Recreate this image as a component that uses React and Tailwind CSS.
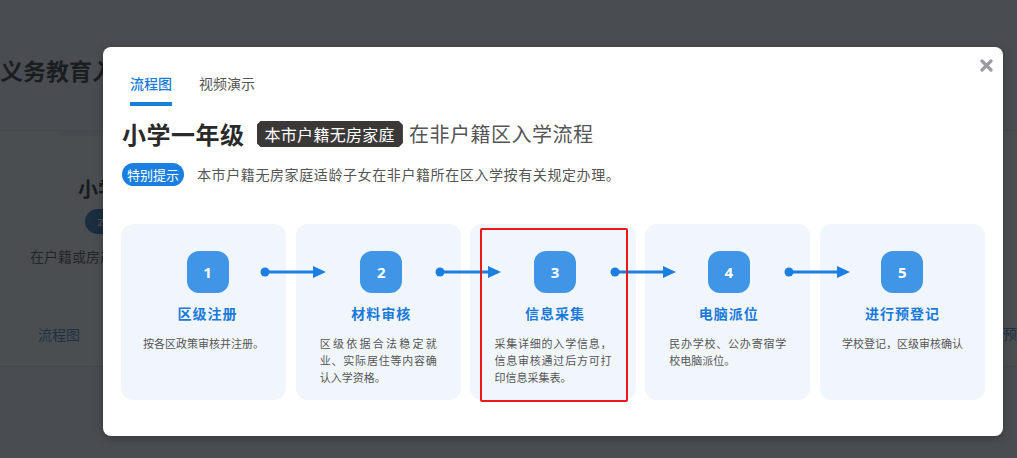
import React from 'react';

const steps = [
  { no: 1, title: '区级注册', desc: '按各区政策审核并注册。', nowrap: true, shift: 'translate-x-[4px]' },
  { no: 2, title: '材料审核', desc: '区级依据合法稳定就业、实际居住等内容确认入学资格。', shift: 'translate-x-[3px]' },
  { no: 3, title: '信息采集', desc: '采集详细的入学信息，信息审核通过后方可打印信息采集表。', shift: 'translate-x-[2px]' },
  { no: 4, title: '电脑派位', desc: '民办学校、公办寄宿学校电脑派位。', shift: 'translate-x-[1px]' },
  { no: 5, title: '进行预登记', desc: '学校登记，区级审核确认', nowrap: true, shift: 'translate-x-0' },
];

const Arrow = () => (
  <svg
    className="absolute top-[41px] left-[calc(100%-26px)] z-10"
    width="66"
    height="14"
    viewBox="0 0 66 14"
  >
    <circle cx="5" cy="7" r="4.5" fill="#1a7fe0" />
    <line x1="5" y1="7" x2="56" y2="7" stroke="#1a7fe0" strokeWidth="3" />
    <polygon points="53,1 66,7 53,13" fill="#1a7fe0" />
  </svg>
);

const StepCard = ({ step, last, highlighted }) => (
  <div className="relative min-w-0 h-[176px] rounded-[12px] bg-[#f1f6fc] flex flex-col items-center pt-[27px]">
    <div className={`${step.shift} w-[42px] h-[42px] rounded-[12px] bg-[#4096e6] flex items-center justify-center text-white text-[15px] font-bold font-[family-name:'Noto_Sans',sans-serif]`}>
      {step.no}
    </div>
    <div className={`${step.shift} mt-[10px] h-[20px] leading-[20px] text-[14px] font-bold text-[#1a7ad9] tracking-[1px]`}>
      {step.title}
    </div>
    <div className="mt-[12px] px-[24px] w-full flex justify-center">
      <p
        className={`inline-block text-[11px] leading-[17px] text-[#555] text-justify ${
          step.nowrap ? 'whitespace-nowrap' : 'max-w-[117px]'
        }`}
      >
        {step.desc}
      </p>
    </div>
    {!last && <Arrow />}
    {highlighted && (
      <div className="absolute left-[10px] top-[4px] w-[148px] h-[174px] border-2 border-[#f0161a] rounded-[2px] z-20" />
    )}
  </div>
);

export default function App() {
  return (
    <div className="relative w-[1017px] h-[458px] overflow-hidden bg-[#f4f6f8] font-[family-name:'Noto_Sans_CJK_SC','Liberation_Sans',sans-serif]">
      {/* page behind the dialog */}
      <div className="h-[130px] pt-[54px]">
        <h1 className="text-[23px] leading-[32px] font-bold text-[#111] whitespace-nowrap">
          义务教育入学流程指引
        </h1>
      </div>
      <div className="relative h-[237px] bg-white border-y border-[#d9e2ea]">
        <div className="absolute top-0 left-[60px] w-[140px] h-[5px] bg-[#e9eef3]" />
        <div className="flex flex-col items-start pt-[44px] whitespace-nowrap">
          <div className="ml-[78px] text-[20px] leading-[28px] font-bold text-black">小学一年级</div>
          <div className="mt-[6px] ml-[85px] h-[25px] px-[12px] rounded-full bg-[#0e5fa3] text-white text-[13px] leading-[25px]">
            本市户籍
          </div>
          <div className="mt-[12px] ml-[30px] text-[14px] leading-[20px] text-[#333]">在户籍或房产所在区入学</div>
          <div className="mt-[58px] ml-[38px] text-[14px] leading-[20px] text-[#1e6fb8]">流程图</div>
        </div>
        <span className="absolute left-[975px] top-[192px] text-[14px] leading-[20px] text-[#1e6fb8] whitespace-nowrap">
          视频预演
        </span>
      </div>

      {/* overlay */}
      <div className="absolute inset-0 bg-[rgba(30,34,37,0.8)]" />

      {/* dialog */}
      <div className="absolute left-[103px] top-[47px] w-[900px] h-[389px] bg-white rounded-[8px] shadow-[0_2px_8px_rgba(0,0,0,0.25)] px-[18px] pt-[26px]">
        <button className="absolute right-[10px] top-[12px] w-[13px] h-[13px]">
          <svg width="13" height="13" viewBox="0 0 13 13">
            <path d="M2 2 L11 11 M11 2 L2 11" stroke="#9a9ca0" strokeWidth="3.2" strokeLinecap="round" />
          </svg>
        </button>

        <div className="ml-[9px] flex gap-[27px] text-[14px] leading-[20px]">
          <div className="flex flex-col">
            <span className="text-[#1a7ad9] font-medium">流程图</span>
            <span className="mt-[9px] h-[4px] bg-[#1a7fd6]" />
          </div>
          <span className="text-[#555]">视频演示</span>
        </div>

        <div className="mt-[12px] pl-px h-[32px] flex items-center whitespace-nowrap">
          <span className="text-[24px] font-bold text-[#2a2a2a] tracking-[0.5px]">小学一年级</span>
          <span className="ml-[12px] h-[26px] px-[8px] bg-[#3b3938] text-white text-[16px] leading-[26px] tracking-[0.3px] [clip-path:polygon(4px_0,calc(100%-4px)_0,100%_4px,100%_calc(100%-4px),calc(100%-4px)_100%,4px_100%,0_calc(100%-4px),0_4px)]">
            本市户籍无房家庭
          </span>
          <span className="ml-[6px] text-[20px] text-[#555] tracking-[0.5px]">在非户籍区入学流程</span>
        </div>

        <div className="mt-[13px] pl-px flex items-center whitespace-nowrap">
          <span className="h-[23px] px-[5px] rounded-full bg-[#1a7fe0] text-white text-[13px] leading-[23px]">
            特别提示
          </span>
          <span className="ml-[13px] text-[14px] text-[#555] tracking-[0.6px]">
            本市户籍无房家庭适龄子女在非户籍所在区入学按有关规定办理。
          </span>
        </div>

        <div className="mt-[38px] grid grid-cols-5 gap-[9.5px]">
          {steps.map((s, i) => (
            <StepCard key={s.no} step={s} last={i === steps.length - 1} highlighted={s.no === 3} />
          ))}
        </div>
      </div>
    </div>
  );
}
